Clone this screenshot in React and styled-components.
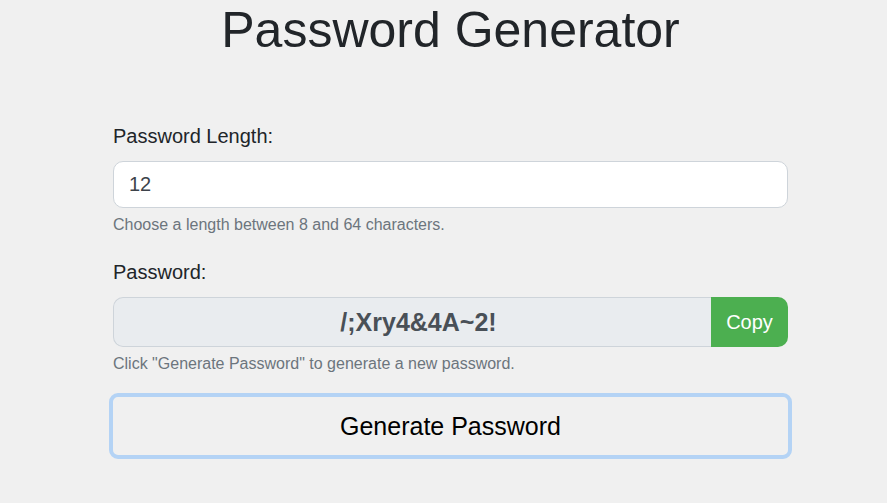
import React, { useState } from 'react';
import styled, { createGlobalStyle } from 'styled-components';

const GlobalStyle = createGlobalStyle`
  html, body {
    margin: 0;
    padding: 0;
    background: #f0f0f0;
    font-family: "Liberation Sans", Arial, sans-serif;
    font-size: 20px;
    color: #212529;
  }
`;

const Page = styled.div`
  display: flex;
  justify-content: center;
  min-height: 100vh;
  padding-left: 14px;
`;

const Main = styled.main`
  width: 675px;
`;

const Title = styled.h1`
  margin: 0 0 61px;
  font-size: 50px;
  font-weight: 400;
  line-height: 60px;
  text-align: center;
  color: #212529;
`;

const Field = styled.div`
  margin-bottom: 20px;
`;

const Label = styled.label`
  display: block;
  margin-bottom: 10px;
  font-size: 20px;
  line-height: 30px;
`;

const Input = styled.input`
  display: block;
  box-sizing: border-box;
  width: 100%;
  height: 47px;
  padding: 7px 15px;
  border: 1px solid #ced4da;
  border-radius: 10px;
  background: #fff;
  font-family: inherit;
  font-size: 20px;
  color: #3d434a;
  outline: none;
`;

const Hint = styled.div`
  margin-top: 5px;
  font-size: 16px;
  line-height: 24px;
  color: #6c757d;
`;

const Group = styled.div`
  display: flex;
  height: 50px;
`;

const Output = styled.input`
  flex: 1;
  min-width: 0;
  box-sizing: border-box;
  padding: 0 15px 0 27px;
  border: 1px solid #ced4da;
  border-right: none;
  border-radius: 10px 0 0 10px;
  background: #e9ecef;
  font-family: inherit;
  font-size: 25px;
  font-weight: 700;
  text-align: center;
  color: #495057;
  outline: none;
`;

const CopyButton = styled.button`
  width: 77px;
  padding: 0;
  border: none;
  border-radius: 0 10px 10px 0;
  background: #4caf50;
  font-family: inherit;
  font-size: 20px;
  color: #fff;
  cursor: pointer;
`;

const GenerateButton = styled.button`
  display: block;
  box-sizing: border-box;
  width: calc(100% + 8px);
  height: 66px;
  margin: 17px 0 0 -4px;
  border: 4px solid #b4d3f5;
  border-radius: 9px;
  background: #f0f0f0;
  font-family: inherit;
  font-size: 25px;
  color: #000;
  cursor: pointer;
`;

const CHARS = 'ABCDEFGHIJKLMNOPQRSTUVWXYZabcdefghijklmnopqrstuvwxyz0123456789!@#$%^&*()_+~;:/?';

export default function App() {
  const [length, setLength] = useState('12');
  const [password, setPassword] = useState('/;Xry4&4A~2!');

  const generate = () => {
    const n = Math.min(64, Math.max(8, parseInt(length, 10) || 12));
    let out = '';
    for (let i = 0; i < n; i++) out += CHARS[Math.floor(Math.random() * CHARS.length)];
    setPassword(out);
  };

  return (
    <>
      <GlobalStyle />
      <Page>
        <Main>
          <Title>Password Generator</Title>
          <Field>
            <Label htmlFor="len">Password Length:</Label>
            <Input id="len" type="text" value={length} onChange={(e) => setLength(e.target.value)} />
            <Hint>Choose a length between 8 and 64 characters.</Hint>
          </Field>
          <div>
            <Label htmlFor="pwd">Password:</Label>
            <Group>
              <Output id="pwd" readOnly value={password} />
              <CopyButton onClick={() => navigator.clipboard && navigator.clipboard.writeText(password)}>Copy</CopyButton>
            </Group>
            <Hint>Click "Generate Password" to generate a new password.</Hint>
          </div>
          <GenerateButton onClick={generate}>Generate Password</GenerateButton>
        </Main>
      </Page>
    </>
  );
}
